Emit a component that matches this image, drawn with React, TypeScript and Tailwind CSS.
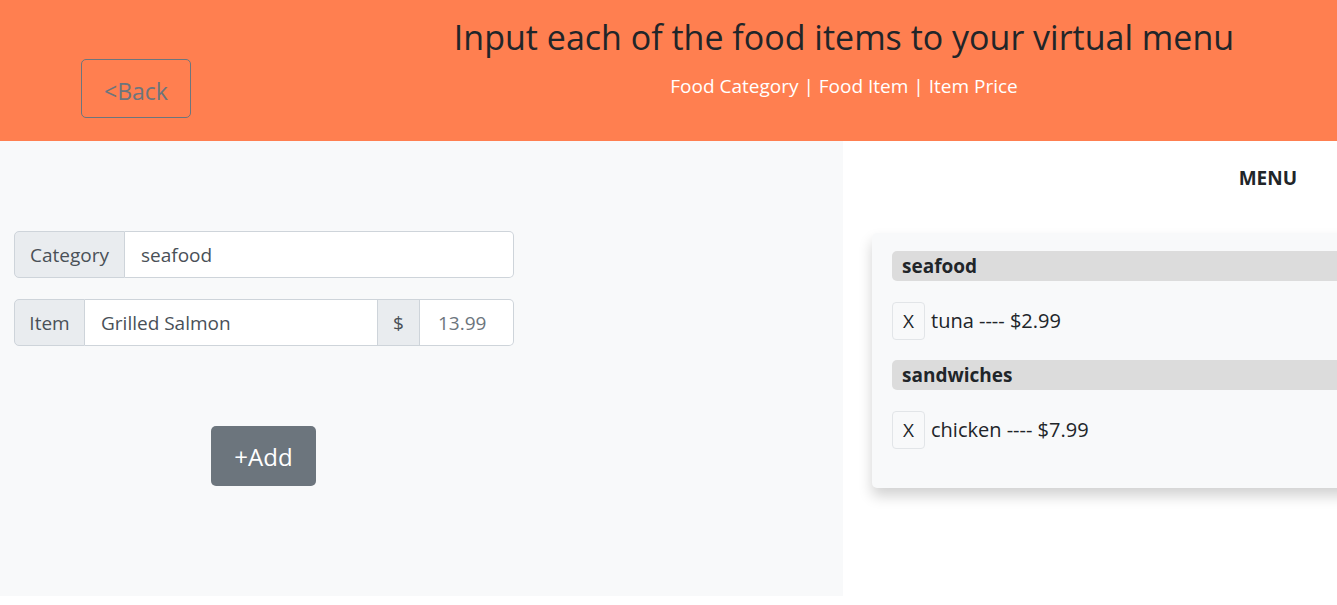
import React from 'react';

const menu = [
  { category: 'seafood', items: [{ name: 'tuna', price: '2.99' }] },
  { category: 'sandwiches', items: [{ name: 'chicken', price: '7.99' }] },
];

export default function App() {
  return (
    <div className="w-[1337px] h-[605px] overflow-hidden bg-white text-[#212529] font-['Open_Sans',sans-serif]">
      {/* header */}
      <header className="h-[141px] bg-[#ff7f50] flex">
        <div className="w-[334px] shrink-0 pl-[81px] pt-[59px]">
          <button className="w-[110px] h-[59px] border border-[#6c757d] rounded-[5px] text-[#6c757d] text-[23px] leading-none pt-[5px]">
            &lt;Back
          </button>
        </div>
        <div className="flex-1 flex flex-col items-center pt-[14px] pl-[17px]">
          <h1 className="text-[34px] leading-[46px] font-medium">Input each of the food items to your virtual menu</h1>
          <p className="mt-[13px] text-[19px] text-white leading-[26px]">Food Category | Food Item | Item Price</p>
        </div>
      </header>

      <div className="flex h-[455px]">
        {/* form panel */}
        <div className="w-[843px] shrink-0 bg-[#f8f9fa] pl-[14px] pt-[90px]">
          <div className="w-[500px] flex h-[47px] text-[19px]">
            <span className="w-[111px] flex items-center justify-center bg-[#e9ecef] border border-[#ced4da] rounded-l-[5px] text-[#495057] pt-[2px]">Category</span>
            <span className="flex-1 flex items-center pl-[16px] bg-white border border-l-0 border-[#ced4da] rounded-r-[5px] text-[#495057] pt-[2px]">seafood</span>
          </div>
          <div className="w-[500px] flex h-[47px] mt-[21px] text-[19px]">
            <span className="w-[71px] flex items-center justify-center bg-[#e9ecef] border border-[#ced4da] rounded-l-[5px] text-[#495057] pt-[2px]">Item</span>
            <span className="w-[293px] flex items-center pl-[16px] bg-white border border-l-0 border-[#ced4da] text-[#495057] pt-[2px]">Grilled Salmon</span>
            <span className="w-[42px] flex items-center justify-center bg-[#e9ecef] border border-l-0 border-[#ced4da] text-[#495057] pt-[2px]">$</span>
            <span className="flex-1 flex items-center pl-[18px] bg-white border border-l-0 border-[#ced4da] rounded-r-[5px] text-[#6c757d] pt-[2px]">13.99</span>
          </div>
          <div className="pl-[197px] pt-[80px]">
            <button className="w-[105px] h-[60px] bg-[#6c757d] rounded-[5px] text-white text-[24px] pt-[2px]">+Add</button>
          </div>
        </div>

        {/* menu panel */}
        <div className="flex-1 min-w-0 pl-[29px]">
          <div className="text-right pr-[40px] pt-[23px] text-[19px] font-bold h-[92px]">MENU</div>
          <div className="w-[520px] h-[255px] bg-[#f8f9fa] rounded-[5px] shadow-[0_8px_14px_rgba(0,0,0,0.18)] pl-[20px] pt-[18px]">
            {menu.map((group) => (
              <div key={group.category} className="mb-[20px]">
                <div className="h-[30px] bg-[#dcdcdc] rounded-l-[5px] pl-[10px] flex items-center text-[19px] font-bold">{group.category}</div>
                {group.items.map((item) => (
                  <div key={item.name} className="flex items-center mt-[21px]">
                    <button className="w-[33px] h-[38px] border border-[#e2e5e8] rounded-[4px] bg-[#f8f9fa] text-[19px] text-[#212529]">X</button>
                    <span className="ml-[6px] text-[20px]">{item.name} ---- ${item.price}</span>
                  </div>
                ))}
              </div>
            ))}
          </div>
        </div>
      </div>
    </div>
  );
}
